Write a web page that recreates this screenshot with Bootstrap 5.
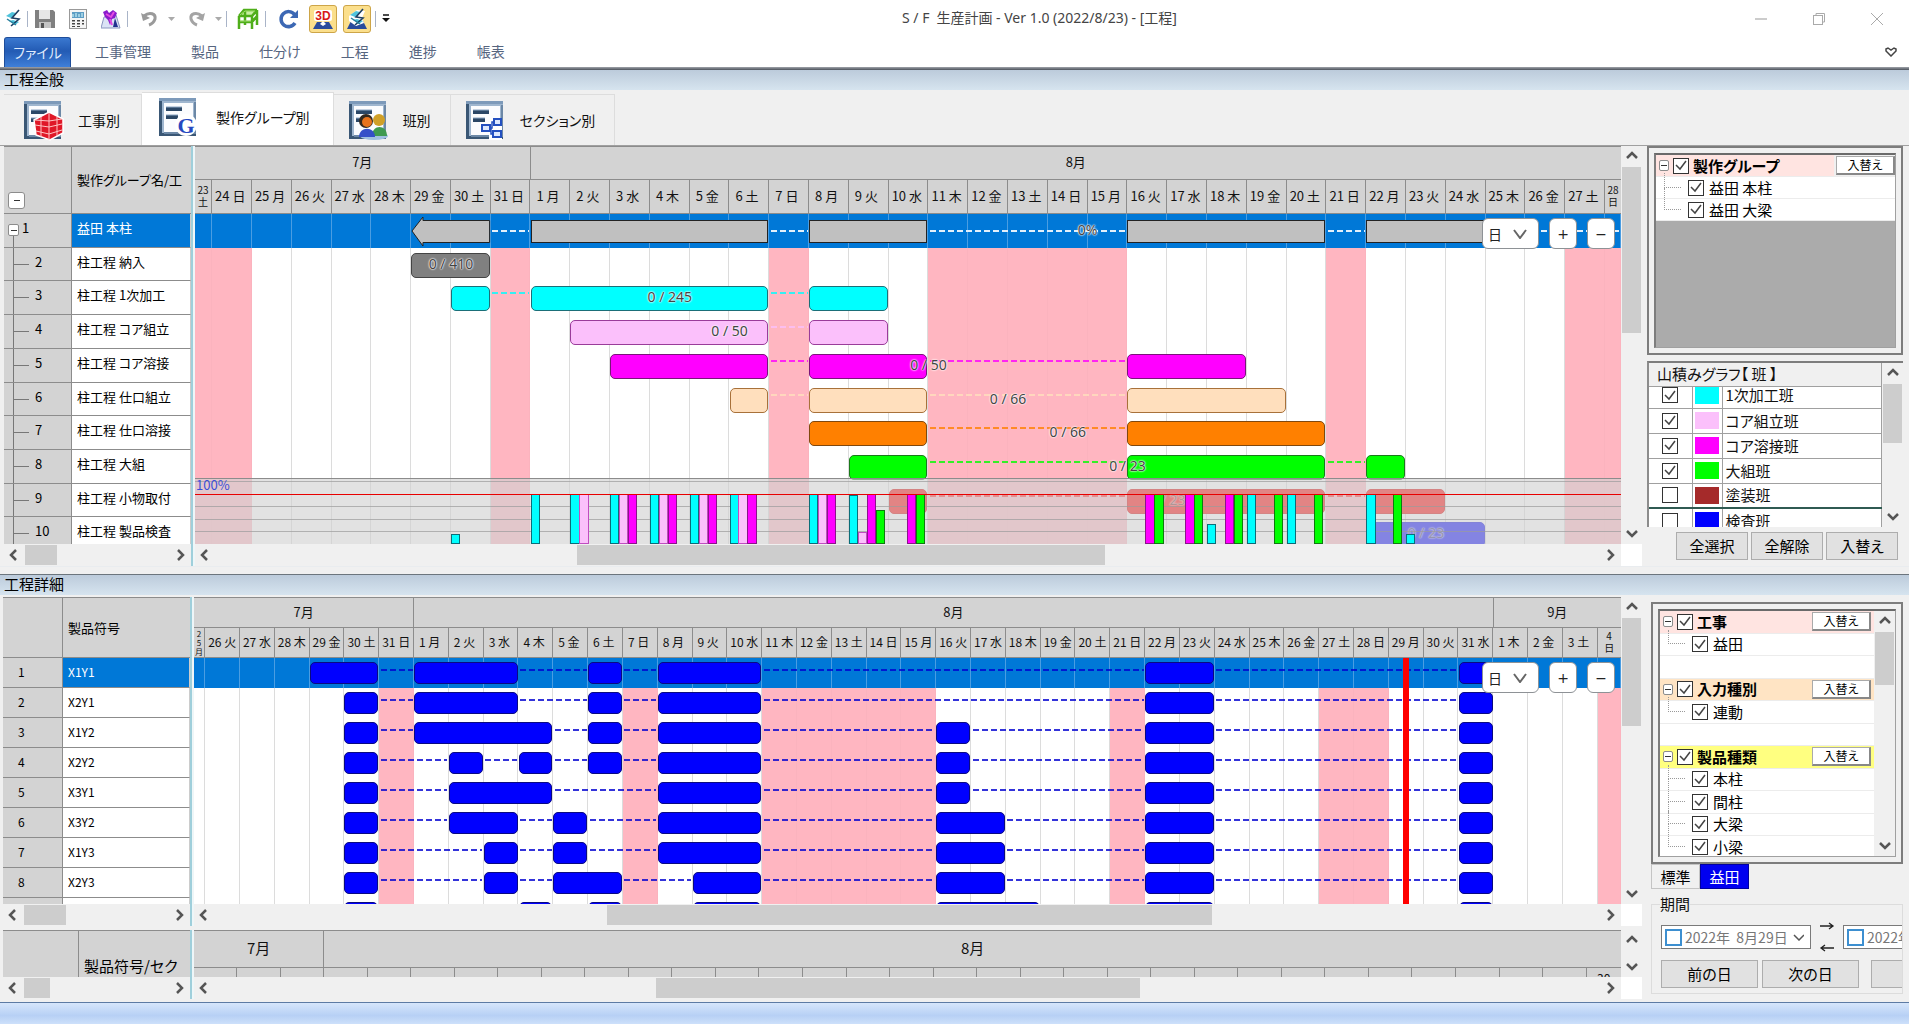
<!DOCTYPE html>
<html lang="ja">
<head>
<meta charset="utf-8">
<meta name="viewport" content="width=device-width, initial-scale=1">
<title>S/F 生産計画</title>
<link rel="stylesheet" href="https://cdn.jsdelivr.net/npm/bootstrap@5.3.0/dist/css/bootstrap.min.css">
<style>
body{font-family:"Noto Sans CJK JP",sans-serif;font-size:15px;line-height:20px;color:#111;background:#f0f0f0;font-feature-settings:"palt";overflow:hidden}
button,input,select{font-family:inherit;font-feature-settings:inherit}
svg{display:block;flex:none}
/* title bar and ribbon */
.titlebar{height:37px;background:#fff;padding:0 4px 0 5px;position:relative}
.gap-a{margin-left:6px}.gap-b{margin-left:10px}.gap-c{margin-left:13px}
.tool-btn{border:0;background:none;padding:0;display:flex;align-items:center;justify-content:center;height:24px}
.tool-on{width:28px;height:28px;border:1px solid #cda548;border-radius:3px;background:#fbdf8c}
.tool-sep{width:1px;height:16px;background:#a9b4c8}
.app-title{font-family:"Noto Sans","Noto Sans CJK JP",sans-serif;font-size:14px;color:#444;position:absolute;inset:8px 0 auto 170px;text-align:center;pointer-events:none}
.win-btns{gap:46px;margin-right:22px}
.ribbon{height:30px;background:#fff;padding-left:4px}
.ribbon .nav-link{color:#56657f;padding:0;height:30px;line-height:28px;font-size:14px}
.ribbon .file-tab{width:67px;text-align:center;color:#dfeafc;background:linear-gradient(#3a78d0,#235bb4 45%,#3f7fd8);border:1px solid #1e4d9a;border-bottom:0;border-radius:3px 3px 0 0}
.edge{height:3px;background:linear-gradient(#a0a4aa,#4c525c)}
.sec-title{height:20px;padding-left:4px;font-size:15px;line-height:18px;background:linear-gradient(#bccbdb,#d6e4ef);color:#000}
/* view tabs */
.view-tabs{height:56px;padding:4px 0 0 4px;border-bottom:1px solid #a0a0a0;align-items:flex-end}
.view-tab{height:51px;border:0;border-top:1px solid #ddd;border-right:1px solid #ddd;background:#f0f0f0;color:#111;padding:0 19px 0 14px;display:flex;align-items:center;gap:14px;font-size:14px;border-radius:0}
.view-tab:first-child{padding:0 21px 0 19px}
.view-tab.on{background:#fff;height:53px;padding-bottom:4px;padding-right:23px;padding-left:16px;gap:17px}
/* gantt frame */
.g-side{width:187px;flex:none}
.g-split{width:4px;flex:none;background:#eef6f8;border-left:2px solid #9fcfdb}
.g-main{flex:1 1 0;min-width:0}
.g-head{background:#d3d3d3;border-top:1px solid #8c8c8c;border-bottom:1px solid #8c8c8c}
.h68{height:68px}.h61{height:61px}.h47{height:47px;overflow:hidden;border-bottom:0}
.g-body{overflow:hidden;position:relative;background:#fff}
.b330{height:330px}.b246{height:246px}
.g-rows{display:grid}
.r10{height:337px;grid-template-rows:repeat(10,minmax(0,1fr))}
.r9{height:270px;grid-template-rows:repeat(9,minmax(0,1fr))}
.g-row{position:relative}
.g-name,.g-num{border-bottom:1px solid #8c8c8c;font-size:13px;line-height:28px;white-space:nowrap;overflow:hidden;color:#000}
.g-name{flex:1;padding-left:5px;border-left:1px solid #8c8c8c;background:#fff;border-right:1px solid #ccc}
.g-num{background:#d3d3d3;flex:none;position:relative}
.w67 .g-num,.g-num.w67{width:67px}
.w59 .g-num{width:59px;padding-left:15px}
.w59 .g-body .g-name,.w59 .g-body .g-num{font-size:12px}
.g-row.on .g-name{background:#0078d7;color:#fff}
.tree-num{padding-left:31px}
.tree-num::before{content:"";position:absolute;left:9px;top:0;bottom:-1px;border-left:1px solid #777}
.tree-num::after{content:"";position:absolute;left:9px;width:16px;top:16px;border-top:1px solid #777}
.tree-num.root{padding-left:18px}
.tree-num.root::before{top:22px}.tree-num.root::after{display:none}
.fold{border:1px solid #8c8c8c;background:#fff;border-radius:2px;padding:0;color:#222;display:flex;align-items:center;justify-content:center}
.fold::before{content:"";width:6px;height:1px;background:#333}
.fold-s{width:11px;height:12px;position:absolute;left:4px;top:10px}
.fold-m{width:17px;height:17px;border-radius:3px}
.months,.days,.cols{display:flex}
.months>div,.days>div,.cols>div{min-width:0;border-right:1px solid #8c8c8c;overflow:hidden;white-space:nowrap;text-align:center}
.months>div:last-child,.days>div:last-child{border-right:0}
.months{height:33px;line-height:30px;font-size:13px;border-bottom:1px solid #8c8c8c}
.days{height:33px;line-height:31px;font-size:13px;font-feature-settings:normal}
.days .day{text-align:left;padding-left:3px}
.days .one{padding-left:6px}
.small-days .months{height:30px;line-height:27px}
.small-days .days{height:29px;line-height:27px;font-size:12px}
.small-days .one{padding-left:5px}
.days .tight{font-size:10px;line-height:12px;padding-top:4px}
.small-days .tight{padding-top:2px}
.days .thin{font-size:8px;line-height:9px;padding-top:1px}
.mini .months{height:37px;line-height:34px;font-size:15px}
.mini .days{height:46px}
.mini .days .tight{font-size:12px;line-height:14px;padding-top:3px}
.cols{position:absolute;inset:0}
.cols>div{border-right-color:#dcdcdc}
.cols .off{background:#ffb6c1;border-right-color:#fbb3be}
.g-row.on.g-track{background:#0078d7}
.on-cols{position:absolute;inset:0;display:flex}
.on-cols>div{border-right:1px solid #4a9de2;min-width:0}
.bar{position:absolute;top:5px;height:25px;border:1px solid #333;border-radius:5px}
.bar.sum{top:6px;height:23px;border-radius:0;background:#c0c0c0;border-color:#222}
.bar.sm{top:4px;height:22px}
.arrow-svg{position:absolute;top:2px;height:31px}
.dash-ln{position:absolute;top:11px;height:2px;opacity:.8}
.dash-ln.sum{top:16px;opacity:1}
.bar-lbl{position:absolute;top:6px;font:14px/20px "Noto Sans",sans-serif;color:#444;transform:translateX(-50%);text-shadow:0 0 1px #fff,0 0 2px #fff,0 0 2px #fff;z-index:2;white-space:nowrap}
.bar-lbl.under{z-index:auto;opacity:.7}
.load{position:absolute;left:0;right:0;bottom:0;height:66px;border-top:1px solid #8c8c8c;background:rgba(209,209,209,.63)}
.load-ln{position:absolute;left:0;right:0;border-top:1px solid #9b9b9b;opacity:.7}
.load-100{position:absolute;left:0;right:0;bottom:49px;border-top:1px solid #e80000}
.load-txt{position:absolute;left:1px;top:-3px;font-size:13px;line-height:18px;color:#3a4fd8}
.load-bar{position:absolute;bottom:0;border:1px solid}
.today{position:absolute;top:0;bottom:0;width:6px;background:red}
.zoomer{position:absolute;right:6px;top:4px;gap:10px;z-index:5}
.zoomer select,.zoomer button{height:31px;border:1px solid #8e9296;border-radius:6px;background-color:#fff;color:#222;font-size:14px;padding:0;line-height:28px}
.zoomer button{width:28px;font-size:14px;font-family:"DejaVu Sans",sans-serif;line-height:26px}
.zoomer select{width:57px;padding-left:5px;appearance:none;background:#fff url("data:image/svg+xml,%3Csvg xmlns='http://www.w3.org/2000/svg' width='14' height='10'%3E%3Cpath d='M1 1l6 8 6-8' fill='none' stroke='%23666' stroke-width='2'/%3E%3C/svg%3E") no-repeat right 11px center}
/* scroll bars */
.sb{display:flex;background:#f0f0f0}
.sb i{background:#cdcdcd}
.sb button{border:0;background:none;padding:0;display:flex;align-items:center;justify-content:center;flex:none}
.sb-h{height:22px;padding:1px 0}.sb-h button{width:20px}
.sb-v{width:21px;flex-direction:column;padding:0 1px}.sb-v button{height:20px}
.corner{height:22px;background:#fff}
/* filter panels */
.side-panel{width:267px;flex:none;padding:0 6px 0 5px}
.side-low{padding:5px 6px 0 9px}
.tick{appearance:none;width:16px;height:16px;border:1px solid #333;background:#fff;margin:0;flex:none;border-radius:0}
.tick:checked{background:#fff url("data:image/svg+xml,%3Csvg xmlns='http://www.w3.org/2000/svg' width='14' height='13'%3E%3Cpath d='M2 6l4 4 6-8' fill='none' stroke='%23444' stroke-width='1.5'/%3E%3C/svg%3E") center no-repeat}
.tree-frame{border:2px solid #7d7d7d;padding:5px}
.tree-in{border:1px solid #a0a0a0;border-top:2px solid #6a6a6a;border-left:2px solid #7d7d7d;background:#fff;overflow:hidden}
.t-row{display:flex;align-items:center;gap:5px;position:relative;border-bottom:1px solid #ececec;font-size:15px;line-height:20px;color:#000}
.t-row label{line-height:20px}
.t-row.grp{font-weight:700;padding-left:3px;gap:4px}
.t-row.grp .fold{width:10px;height:11px;flex:none}
.t-row.kid{padding-left:32px}
.t-row.kid::before{content:"";position:absolute;left:8px;top:-4px;bottom:50%;width:17px;border-left:1px dotted #999;border-bottom:1px dotted #999}
.t-row.kid.more::after{content:"";position:absolute;left:8px;top:50%;bottom:0;border-left:1px dotted #999}
.pink-h{background:#ffe4e1}.peach-h{background:#ffe4c4}.lemon-h{background:#ffff80}
.swap{margin-left:auto;width:59px;height:19px;border:1px solid #aaa;border-right:2px solid #888;border-bottom:2px solid #888;background:#fff;font-size:12px;line-height:14px;padding:0;color:#000}
.tall .swap{margin-right:3px}
.upper-tree{height:195px;background:#ababab}
.upper-tree .t-row{background-color:#fff;height:22px}
.upper-tree .pink-h{background:linear-gradient(90deg,#ffe4e1 178px,#f0f0f0 178px)}
.load-list{height:166px;border-top:2px solid #7d7d7d;border-left:2px solid #8c8c8c;margin-top:6px}
.ll-head{height:24px;line-height:22px;padding-left:8px;border-bottom:1px solid #a0a0a0;border-right:1px solid #a0a0a0;background:#f0f0f0}
.ll-clip{overflow:hidden;height:140px}
.ll-clip table{width:100%;margin-top:-4px;background:#fff;border-collapse:collapse}
.ll-clip td{height:25px;padding:0;border:1px solid #a0a0a0;border-top:0;line-height:18px}
.ll-clip td:first-child{width:43px;border-left:0}
.ll-clip td:nth-child(2){width:30px}
.ll-clip td:nth-child(3){padding-left:3px}
.ll-clip .tick{display:block;margin:auto}
.ll-clip .last-on td{border-bottom:2px solid #2f5a52}
.swatch{width:24px;height:17px;margin:auto}
.cmd-row{gap:3px;padding:5px 5px 6px 0}
.cmd{height:28px;width:72px;flex:none;border:1px solid #adadad;background:#e1e1e1;font-size:15px;line-height:20px;padding:0;color:#000}
.cmd.wide{width:97px}
.lower-tree{height:248px;display:flex}
.lt-rows{flex:1;display:grid;height:270px;grid-template-rows:repeat(12,minmax(0,1fr))}
.preset{height:25px;border:1px solid #c4c4c4;background:#f0f0f0;width:49px;padding:0;font-size:15px;line-height:20px;color:#000}
.preset.on{background:#0000f0;color:#fff;border-color:#0000a0}
.period{border:1px solid #dcdcdc;padding:0 0 5px 9px;margin-top:5px;min-width:0;overflow:hidden}
.period legend{font-size:15px;line-height:20px;float:none;width:auto;padding:0;margin:0 0 0 -1px}
.period-row{margin-top:7px;gap:4px}
.date-box{width:150px;height:24px;border:1px solid #7a7a7a;background:#fff;flex:none;display:flex;align-items:center;padding:0 6px 0 3px}
.date-box input[type=text]{border:0;font-size:14px;color:#777;padding:0 0 0 3px;background:none;line-height:20px;width:0;min-width:0;flex:1}
.date-box .tick{border:2px solid #3d8fd0;width:17px;height:17px}
.sec-low{margin-top:7px;height:21px}
.low-wrap{padding-top:2px}
.pad-l4{padding-left:4px}.pad-l3{padding-left:3px}
.mini-num{width:75px}
.mini-name{font-size:15px;line-height:22px}
.status{height:22px;border-top:1px solid #5d7ba4;background:linear-gradient(#d6e6fb,#b7d0f5 60%,#cde0fa)}
</style>
</head>
<body class="d-flex flex-column min-vh-100">
<svg width="0" height="0" class="position-absolute">
  <defs>
    <g id="doc">
      <rect x="1" y="1" width="37" height="38" fill="#3a5775"/><rect x="4" y="2" width="34" height="34" fill="#9fb6cf"/><rect x="6" y="6" width="29" height="29" fill="#fbfcfe"/>
      <rect x="1" y="1" width="37" height="3" fill="#7d9aba"/><path d="M37 5v31H6" fill="none" stroke="#6c88a6" stroke-width="2"/>
      <path d="M8 12h16M8 20h12" stroke="#2b4766" stroke-width="4"/><path d="M8 10h16M8 18h12" stroke="#8ca7c4" stroke-width="1"/>
    </g>
    <g id="compass">
      <path d="M1 7l6-4 4 1-5 5zM4 12l6 4 4-3-6-2z" fill="#4fc3dc"/><path d="M14 1L7 9l7 1-8 7" fill="none" stroke="#1d3f63" stroke-width="1.6"/><path d="M2 10l9 6" stroke="#2a7f9c" stroke-width="1.5"/>
    </g>
  </defs>
</svg>

<header>
  <div class="titlebar d-flex align-items-center">
    <svg width="16" height="19" viewBox="0 0 16 19"><use href="#compass"/></svg>
    <span class="tool-sep gap-a"></span>
    <button class="tool-btn gap-a" aria-label="保存"><svg width="22" height="20" viewBox="0 0 22 20"><path d="M1 1h18l2 2v16H1z" fill="#808080"/><rect x="5" y="1" width="11" height="9" fill="#e6e6e6"/><rect x="5" y="13" width="12" height="6" fill="#c4c4c4"/><rect x="7" y="14" width="3" height="5" fill="#555"/></svg></button>
    <button class="tool-btn gap-c" aria-label="計算"><svg width="19" height="20" viewBox="0 0 19 20"><rect x=".5" y=".5" width="17" height="19" fill="#f5f5f5" stroke="#999"/><rect x="3" y="3" width="12" height="6" fill="#5d9dc4"/><path d="M4 8V5M7 8V4M10 8V5M13 8V4" stroke="#dff" stroke-width="1"/><g fill="#444"><path d="M3 11h3v1.500H3zM8 11h3v1.500H8zM13 11h2v1.500h-2zM3 14h3v1.500H3zM8 14h3v1.500H8zM13 14h2v1.500h-2zM3 17h3v1H3zM8 17h3v1H8z"/></g></svg></button>
    <button class="tool-btn gap-c" aria-label="検索"><svg width="20" height="20" viewBox="0 0 20 20"><path d="M3 8L0 19h19L15 6z" fill="#dbe3f6" stroke="#8a95c0"/><path d="M2 3l4-2 2 3 4-3 4 3-2 5-3 1-2 6-2-5-3-3z" fill="#8a1ccc"/><path d="M5 5l5 3 3-5M9 10l2 6" stroke="#e44be0" stroke-width="2" fill="none"/><path d="M14 9l3 9h-5z" fill="#23308f"/></svg></button>
    <span class="tool-sep gap-a"></span>
    <button class="tool-btn gap-c" aria-label="元に戻す"><svg width="17" height="17" viewBox="0 0 17 17"><path d="M3 6c6-5 12-2 11 3-1 3-3 5-6 6" fill="none" stroke="#9a9a9a" stroke-width="3"/><path d="M0 3l2 8 7-3z" fill="#9a9a9a"/></svg></button>
    <button class="tool-btn gap-b" aria-label="履歴"><svg width="7" height="4" viewBox="0 0 7 4"><path d="M0 0h7L3.500 4z" fill="#aaa"/></svg></button>
    <button class="tool-btn gap-c" aria-label="やり直し"><svg width="17" height="17" viewBox="0 0 17 17"><path d="M14 6C8 1 2 4 3 9c1 3 3 5 6 6" fill="none" stroke="#a4a4a4" stroke-width="3"/><path d="M17 3l-2 8-7-3z" fill="#a4a4a4"/></svg></button>
    <button class="tool-btn gap-b" aria-label="履歴"><svg width="7" height="4" viewBox="0 0 7 4"><path d="M0 0h7L3.500 4z" fill="#aaa"/></svg></button>
    <span class="tool-sep ms-1"></span>
    <button class="tool-btn gap-b" aria-label="鉄骨"><svg width="22" height="22" viewBox="0 0 22 22"><path d="M2 8l5-6h13v3l-5 4H2z" fill="#c9efa4"/><path d="M2 8l5-6h13M2 8h13l5-6M2 14h13l5-6M2 8v13M8 2v15M15 8v13M20 2v15" fill="none" stroke="#4fae1a" stroke-width="2.500"/><path d="M3 7l5-4h10M3 13h11" stroke="#a5e070" stroke-width="1" fill="none"/></svg></button>
    <span class="tool-sep gap-a"></span>
    <button class="tool-btn gap-c" aria-label="更新"><svg width="20" height="20" viewBox="0 0 20 20"><path d="M16 14a7.500 7.500 0 1 1-.5-8.500" fill="none" stroke="#3c68b4" stroke-width="3.500"/><path d="M19 1v8h-8z" fill="#3c68b4"/></svg></button>
    <button class="tool-btn tool-on gap-b" aria-label="3D"><svg width="22" height="22" viewBox="0 0 22 22"><path d="M5 14h12l4 7H1z" fill="#2a4b9c"/><path d="M8 16l3-3 3 3-3 2z" fill="#fff"/><rect x="2" y="2" width="18" height="11" rx="2" fill="#fff"/><text x="11" y="12" font-size="12" font-weight="700" font-family="Liberation Sans" text-anchor="middle" fill="#d81818">3D</text></svg></button>
    <button class="tool-btn tool-on gap-a" aria-label="2D"><svg width="22" height="22" viewBox="0 0 22 22"><path d="M5 13h12l4 8H1z" fill="#2a4b9c"/><path d="M3 8l8-6 8 1-3 7 2 5-8 3-7-5z" fill="#fff"/><use href="#compass" x="3"/></svg></button>
    <span class="tool-sep ms-1"></span>
    <button class="tool-btn gap-a" aria-label="カスタマイズ"><svg width="8" height="9" viewBox="0 0 8 9"><path d="M1 1h6" stroke="#111" stroke-width="1.500"/><path d="M0 4h8L4 8z" fill="#111"/></svg></button>
    <div class="app-title">S / F&ensp;生産計画 - Ver 1.0 (2022/8/23) - [工程]</div>
    <div class="win-btns d-flex ms-auto">
      <button class="tool-btn" aria-label="最小化"><svg width="12" height="12"><path d="M0 6h12" stroke="#999"/></svg></button>
      <button class="tool-btn" aria-label="元のサイズ"><svg width="12" height="12" fill="none" stroke="#aaa"><rect x=".5" y="2.500" width="9" height="9"/><path d="M3 2V.5h8.500V9H10"/></svg></button>
      <button class="tool-btn" aria-label="閉じる"><svg width="12" height="12"><path d="M0 0l12 12M12 0L0 12" stroke="#aaa"/></svg></button>
    </div>
  </div>
  <nav class="ribbon nav flex-nowrap align-items-center">
    <a class="nav-link file-tab" href="#">ファイル</a>
    <a class="nav-link ms-4" href="#">工事管理</a>
    <a class="nav-link ms-4 ps-3" href="#">製品</a>
    <a class="nav-link ms-4 ps-3" href="#">仕分け</a>
    <a class="nav-link ms-4 ps-3" href="#">工程</a>
    <a class="nav-link ms-4 ps-3" href="#">進捗</a>
    <a class="nav-link ms-4 ps-3" href="#">帳表</a>
    <button class="tool-btn ms-auto me-2 pe-1" aria-label="リボン"><svg width="12" height="10" viewBox="0 0 12 10"><path d="M1 2l2-1 3 2 3-2 2 1v2L6 9 1 4z" fill="none" stroke="#444" stroke-width="1.500"/></svg></button>
  </nav>
  <div class="edge"></div>
</header>

<section>
  <div class="sec-title">工程全般</div>
  <div class="view-tabs d-flex">
    <button class="view-tab"><svg width="41" height="41" viewBox="0 0 41 41"><use href="#doc"/><path d="M11 20l15-8 14 7v14l-13 7-14-5z" fill="#e01828" stroke="#fff" stroke-width="1.500"/><path d="M26 13v27M18 17v20M34 17v19M12 25l14 2 13-3M13 31l13 3 13-4M12 20l14 1 13-2" stroke="#ffc4c4" fill="none"/></svg>工事別</button>
    <button class="view-tab on"><svg width="41" height="41" viewBox="0 0 41 41"><use href="#doc"/><circle cx="28" cy="28" r="11" fill="#fff"/><text x="28" y="36" font-size="22" font-weight="700" font-family="Liberation Serif" text-anchor="middle" fill="#2548c0">G</text></svg>製作グループ別</button>
    <button class="view-tab"><svg width="41" height="41" viewBox="0 0 41 41"><use href="#doc"/><ellipse cx="26" cy="36" rx="14" ry="4" fill="#9fc0e0"/><circle cx="31" cy="20" r="6" fill="#d0a028"/><path d="M24 36c0-12 15-12 15 0z" fill="#3f9a50"/><circle cx="18" cy="21" r="7" fill="#33291f"/><circle cx="19" cy="22" r="5" fill="#e8731c"/><path d="M11 37c0-11 16-11 16 0z" fill="#3450c8"/></svg>班別</button>
    <button class="view-tab"><svg width="41" height="41" viewBox="0 0 41 41"><use href="#doc"/><path d="M15 22h10v-3h12v21H24v-8h-9z" fill="#fff"/><g fill="#dce8ff" stroke="#2450c0" stroke-width="2"><rect x="17" y="25" width="8" height="6"/><rect x="29" y="19" width="7" height="6"/><rect x="28" y="31" width="8" height="6"/></g><path d="M25 28h2v-6h2M26 28v6h2" fill="none" stroke="#2450c0" stroke-width="1.500"/></svg>セクション別</button>
  </div>
  <div class="d-flex">
    <div class="d-flex g-main pad-l4">
      <div class="g-side w67">
        <div class="g-head h68 d-flex">
          <div class="g-num w67 border-0 d-flex align-items-end p-1"><button class="fold fold-m" aria-label="すべて折りたたむ"></button></div>
          <div class="g-name border-bottom-0 border-end-0 bg-transparent d-flex align-items-center">製作グループ名/工</div>
        </div>
        <div class="g-body b330"><div class="g-rows r10" id="names1"></div></div>
        <div class="sb sb-h" data-sb="h,1,32,113"></div>
      </div>
      <div class="g-split"></div>
      <div class="g-main">
        <div class="g-head h68" id="head1"></div>
        <div class="g-body b330" id="body1"></div>
        <div class="sb sb-h" data-sb="h,362,528,496"></div>
      </div>
      <div class="d-flex flex-column"><div class="sb sb-v flex-fill" data-sb="v,1,166,190"></div><div class="corner"></div></div>
    </div>
    <aside class="side-panel">
      <div class="tree-frame">
        <div class="tree-in upper-tree">
          <div class="t-row grp pink-h"><button class="fold" aria-label="折りたたむ"></button><input class="tick" type="checkbox" id="g0" checked><label for="g0">製作グループ</label><button class="swap">入替え</button></div>
          <div class="t-row kid more"><input class="tick" type="checkbox" id="g1" checked><label for="g1">益田 本柱</label></div>
          <div class="t-row kid"><input class="tick" type="checkbox" id="g2" checked><label for="g2">益田 大梁</label></div>
        </div>
      </div>
      <div class="load-list d-flex">
        <div class="flex-fill">
          <div class="ll-head">山積みグラフ【 班 】</div>
          <div class="ll-clip"><table><tbody id="teams"></tbody></table></div>
        </div>
        <div class="sb sb-v" data-sb="v,1,58,62"></div>
      </div>
      <div class="cmd-row d-flex justify-content-end">
        <button class="cmd">全選択</button><button class="cmd">全解除</button><button class="cmd">入替え</button>
      </div>
    </aside>
  </div>
</section>

<section class="border-top border-secondary-subtle flex-fill d-flex flex-column">
  <div class="sec-title sec-low border-top border-secondary">工程詳細</div>
  <div class="d-flex low-wrap flex-fill">
    <div class="g-main d-flex flex-column pad-l3">
      <div class="d-flex">
        <div class="g-side w59">
          <div class="g-head h61 d-flex">
            <div class="g-num border-0"></div>
            <div class="g-name border-bottom-0 border-end-0 bg-transparent d-flex align-items-center">製品符号</div>
          </div>
          <div class="g-body b246"><div class="g-rows r9" id="names2"></div></div>
          <div class="sb sb-h" data-sb="h,1,42,104"></div>
        </div>
        <div class="g-split"></div>
        <div class="g-main">
          <div class="g-head h61 small-days" id="head2"></div>
          <div class="g-body b246" id="body2"></div>
          <div class="sb sb-h" data-sb="h,393,604,389"></div>
        </div>
        <div class="d-flex flex-column"><div class="sb sb-v flex-fill" data-sb="v,1,108,157"></div><div class="corner"></div></div>
      </div>
      <div class="d-flex mt-1">
        <div class="g-side">
          <div class="g-head h47 d-flex">
            <div class="mini-num"></div>
            <div class="g-name mini-name border-bottom-0 border-end-0 bg-transparent d-flex align-items-end">製品符号/セク</div>
          </div>
          <div class="sb sb-h" data-sb="h,1,26,120"></div>
        </div>
        <div class="g-split"></div>
        <div class="g-main">
          <div class="g-head h47 mini" id="head3"></div>
          <div class="sb sb-h" data-sb="h,442,483,461"></div>
        </div>
        <div class="d-flex flex-column"><div class="sb sb-v flex-fill" data-sb="v,1,0,0"></div><div class="corner"></div></div>
      </div>
    </div>
    <aside class="side-panel side-low">
      <div class="tree-frame">
        <div class="tree-in lower-tree tall">
          <div class="lt-rows" id="filters"></div>
          <div class="sb sb-v" data-sb="v,1,53,150"></div>
        </div>
      </div>
      <div class="d-flex"><button class="preset">標準</button><button class="preset on">益田</button></div>
      <fieldset class="period">
        <legend>期間</legend>
        <div class="d-flex align-items-center period-row">
          <div class="date-box"><input class="tick" type="checkbox" aria-label="開始日を使う"><input type="text" aria-label="開始日" value="2022年  8月29日"><svg width="11" height="7"><path d="M1 1l5 5 5-5" fill="none" stroke="#555" stroke-width="1.500"/></svg></div>
          <svg class="mx-1" width="16" height="32" fill="none" stroke="#222" stroke-width="1.300"><path d="M1 5h13M10 2l4 3-4 3M15 27H2M6 24l-4 3 4 3"/></svg>
          <div class="date-box"><input class="tick" type="checkbox" aria-label="終了日を使う"><input type="text" aria-label="終了日" value="2022年  8月29日"></div>
        </div>
        <div class="d-flex period-row">
          <button class="cmd wide">前の日</button><button class="cmd wide">次の日</button><button class="cmd wide ms-2" aria-label="今日"></button>
        </div>
      </fieldset>
    </aside>
  </div>
</section>
<footer class="status"></footer>

<script src="https://cdn.jsdelivr.net/npm/bootstrap@5.3.0/dist/js/bootstrap.bundle.min.js"></script>
<script>
const $ = id => document.getElementById(id);
const WD = '日月火水木金土';
// Day 0 is 1 August 2022; a view spans `len` days from `from`.
const view1 = {from:-8.43, len:35.83, off:d => [-9,-8,-1,6,10,11,12,13,14,20,26,27].includes(d)};
const view2 = {from:-6.32, len:40.98, off:d => [-1,6,10,11,12,13,14,20,26,27,34].includes(d)};
const view3 = {from:-2.99, len:32.78, off:() => false, partial:true};
const pos = (v,d) => (d-v.from)/v.len*100;
const dateOf = d => new Date(2022,7,1+d);
function cells(v){
  const out=[], end=v.from+v.len;
  for(let d=Math.floor(v.from); d<end; d++){
    out.push({d, w:Math.min(d+1,end)-Math.max(d,v.from)});
  }
  return out;
}
function header(el,v){
  const months=[];
  cells(v).forEach(c=>{const m=dateOf(c.d).getMonth()+1; const l=months[months.length-1];
    if(l&&l.m===m) l.w+=c.w; else months.push({m,w:c.w});});
  el.innerHTML='<div class="months">'+months.map(m=>`<div style="width:${m.w/v.len*100}%">${m.m}月</div>`).join('')+'</div>'
   +'<div class="days">'+cells(v).map(c=>{
     const t=dateOf(c.d), n=String(t.getDate()), w=WD[t.getDay()];
     let cls='day', txt=n+' '+w;
     if(c.w<.35){cls='tight thin'; txt=[...n].join('<br>')+'<br>'+w;}
     else if(c.w<.85){cls='tight'; txt=v.partial?n:n+'<br>'+w;}
     else if(v.partial) txt='';
     else if(n.length<2) cls='day one';
     return `<div class="${cls}" style="width:${c.w/v.len*100}%">${txt}</div>`}).join('')+'</div>';
}
const columns = v => cells(v).map(c=>`<div class="${v.off(c.d)?'off':''}" style="width:${c.w/v.len*100}%"></div>`).join('');
function dashes(v,segs,color,cls){
  let h='';
  for(let i=1;i<segs.length;i++){
    const a=segs[i-1][1], b=segs[i][0];
    h+=`<div class="dash-ln ${cls}" style="left:${pos(v,a)+.1}%;width:${(b-a)/v.len*100-.2}%;background:repeating-linear-gradient(90deg,${color} 0 6px,transparent 6px 9px)"></div>`;
  }
  return h;
}
const bars = (v,segs,c,line,cls) => segs.map(s=>`<div class="bar ${cls}" style="left:${pos(v,s[0])}%;width:calc(${(s[1]-s[0])/v.len*100}% - 1px);background:${c};border-color:${line}"></div>`).join('');

header($('head1'),view1); header($('head2'),view2); header($('head3'),view3);

const rows1=[
 ['益田 本柱'],
 ['柱工程 納入','#808080','#444','0 / 410',[[-3,-1]]],
 ['柱工程 1次加工','#00ffff','#1b6f78','0 / 245',[[-2,-1],[0,6],[7,9]]],
 ['柱工程 コア組立','#fbc0fb','#9a3c9a','0 / 50',[[1,6],[7,9]]],
 ['柱工程 コア溶接','#ff00ff','#7a147a','0 / 50',[[2,6],[7,10],[15,18]]],
 ['柱工程 仕口組立','#ffdfbd','#a8713a','0 / 66',[[5,6],[7,10],[15,19]]],
 ['柱工程 仕口溶接','#ff8000','#80480e','0 / 66',[[7,10],[15,20]]],
 ['柱工程 大組','#00ff00','#1b7a1b','0 / 23',[[8,10],[15,20],[21,22]]],
 ['柱工程 小物取付','#ff0000','#d80000','0 / 23',[[9,10],[15,20],[21,23]]],
 ['柱工程 製品検査','#0000ff','#0000e0','0 / 23',[[21,24]]]];
$('names1').innerHTML=rows1.map((r,i)=>`<div class="g-row d-flex ${i?'':'on'}"><div class="g-num tree-num ${i?'':'root'}">${i?'':'<button class="fold fold-s" aria-label="折りたたむ"></button>'}${i+1}</div><div class="g-name">${r[0]}</div></div>`).join('');
const zoomer='<div class="zoomer d-flex"><select aria-label="表示単位"><option>日</option><option>週</option><option>月</option></select><button aria-label="拡大">+</button><button aria-label="縮小">−</button></div>';
let h=`<div class="cols">${columns(view1)}</div><div class="g-rows r10">`;
rows1.forEach((r,i)=>{
  if(!i){
    h+=`<div class="g-row g-track on"><div class="on-cols">${columns(view1)}</div>`
     +dashes(view1,[[-3,-1],[0,6],[7,10],[15,20],[21,24],[31,31]],'#e4f0fb','sum')
     +bars(view1,[[0,6],[7,10],[15,20],[21,24]],'#c0c0c0','#222','sum')
     +`<svg class="arrow-svg" style="left:${pos(view1,-3)}%;width:${2/view1.len*100}%" viewBox="0 0 80 31" preserveAspectRatio="none"><path d="M1 15L12 1v3.500h67v22H12V30z" fill="#c0c0c0" stroke="#222"/></svg>`
     +`<span class="bar-lbl" style="left:${pos(view1,14)}%">0%</span></div>`;
  }else{
    const s=r[4];
    h+=`<div class="g-row">${dashes(view1,s,r[1],'')}${bars(view1,s,r[1],r[2],'')}<span class="bar-lbl ${i>7?'under':''}" style="left:${pos(view1,(s[0][0]+s[s.length-1][1])/2)}%">${r[3]}</span></div>`;
  }
});
h+='</div>';
// Load histogram: [day, slot, share of capacity]
const load=[[-2,0,.2],[0,0,1],[1,0,1],[1,1,1]];
[2,3,4,5,7].forEach(d=>load.push([d,0,1],[d,1,1],[d,2,1]));
load.push([8,0,.98],[8,1,.25],[8,2,1],[8,3,.68],[9,2,1],[9,3,1],[15,2,1],[15,3,1],[16,2,1],[16,3,1],[17,0,.4],[17,2,1],[17,3,1],[18,0,1],[18,3,1],[19,0,1],[19,3,1],[21,0,1],[21,3,1],[22,0,.2]);
const LC=[['#00ffff','#0b6d78'],['#fbc0fb','#c04cc0'],['#ff00ff','#8a148a'],['#00ff00','#0f7a0f']];
h+='<div class="load">'+[12,24,37,62].map(b=>`<div class="load-ln" style="bottom:${b}px"></div>`).join('')
 +load.map(([d,k,p])=>`<div class="load-bar" style="left:${pos(view1,d+k*.225)}%;width:${.235/view1.len*100}%;height:${p*50}px;background:${LC[k][0]};border-color:${LC[k][1]}"></div>`).join('')
 +'<div class="load-100"></div><span class="load-txt">100%</span></div>'+zoomer;
$('body1').innerHTML=h;

const tail=[[21,23],[30,31]];
const rows2=[
 ['X1Y1',[[-3,-1],[0,3],[5,6],[7,10]]],
 ['X2Y1',[[-2,-1],[0,3],[5,6],[7,10]]],
 ['X1Y2',[[-2,-1],[0,4],[5,6],[7,10],[15,16]]],
 ['X2Y2',[[-2,-1],[1,2],[3,4],[5,6],[7,10],[15,16]]],
 ['X3Y1',[[-2,-1],[1,4],[7,10],[15,16]]],
 ['X3Y2',[[-2,-1],[1,3],[4,5],[7,10],[15,17]]],
 ['X1Y3',[[-2,-1],[2,3],[4,5],[7,10],[15,17]]],
 ['X2Y3',[[-2,-1],[2,3],[4,6],[8,10],[15,17]]],
 ['',[[-2,-1],[3,4],[5,6],[8,10],[15,18]]]];
$('names2').innerHTML=rows2.map((r,i)=>`<div class="g-row d-flex ${i?'':'on'}"><div class="g-num">${r[0]?i+1:''}</div><div class="g-name">${r[0]}</div></div>`).join('');
h=`<div class="cols">${columns(view2)}</div><div class="g-rows r9">`;
rows2.forEach((r,i)=>{
  const s=r[1].concat(tail);
  h+=`<div class="g-row ${i?'':'g-track on'}">${i?'':'<div class="on-cols">'+columns(view2)+'</div>'}${dashes(view2,s,'#0000d0','')}${bars(view2,s,'#0000ff','#0a0a80','sm')}</div>`;
});
h+=`</div><div class="today" style="left:${pos(view2,28.4)}%"></div>`+zoomer;
$('body2').innerHTML=h;

$('teams').innerHTML=[['1次加工班','#00ffff',1],['コア組立班','#fbc0fb',1],['コア溶接班','#ff00ff',1],['大組班','#00ff00',1],['塗装班','#a52a2a',0],['検査班','#0000ff',0]]
 .map((t,i)=>`<tr class="${i===4?'last-on':''}"><td><input class="tick" type="checkbox" id="t${i}" ${t[2]?'checked':''}></td><td><div class="swatch" style="background:${t[1]}"></div></td><td><label for="t${i}">${t[0]}</label></td></tr>`).join('');

const kid=(t,i,m)=>`<div class="t-row kid ${m?'more':''}"><input class="tick" type="checkbox" id="f${i}" checked><label for="f${i}">${t}</label></div>`;
const grp=(t,i,c)=>`<div class="t-row grp ${c}"><button class="fold" aria-label="折りたたむ"></button><input class="tick" type="checkbox" id="f${i}" checked><label for="f${i}">${t}</label><button class="swap">入替え</button></div>`;
$('filters').innerHTML=grp('工事',0,'pink-h')+kid('益田',1)+'<div class="t-row"></div>'
 +grp('入力種別',2,'peach-h')+kid('連動',3)+'<div class="t-row"></div>'
 +grp('製品種類',4,'lemon-h')+kid('本柱',5,1)+kid('間柱',6,1)+kid('大梁',7,1)+kid('小梁',8)
 +'<div class="t-row align-items-start"><button class="swap">入替え</button></div>';

const CH={l:'M8 1L3 6l5 5',r:'M3 1l5 5-5 5',u:'M1 8l5-5 5 5',d:'M1 3l5 5 5-5'};
const arrow=(k,n)=>`<button aria-label="${n}"><svg width="12" height="12"><path d="${CH[k]}" fill="none" stroke="#555" stroke-width="2.500"/></svg></button>`;
document.querySelectorAll('[data-sb]').forEach(e=>{
  const [o,a,b,c]=e.dataset.sb.split(',');
  e.innerHTML=arrow(o==='h'?'l':'u','戻る')+`<span style="flex:${a} 1 0"></span><i style="flex:${b} 1 0"></i><span style="flex:${c} 1 0"></span>`+arrow(o==='h'?'r':'d','進む');
});
</script>
</body>
</html>
